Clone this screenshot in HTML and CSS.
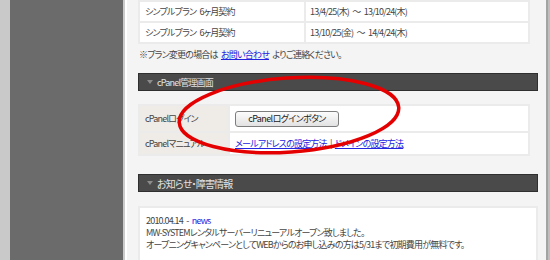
FILE: index.html
```html
<!DOCTYPE html>
<html lang="ja">
<head>
  <meta charset="UTF-8" />
  <title>レンタルサーバー マイページ</title>
  <link rel="stylesheet" href="styles.css">
</head>
<body>
  <div class="layout">
    <div class="edge"></div>
    <div class="sidebar"></div>

    <div class="content">
      <table class="plans">
        <tr><td class="plan"></td><td></td></tr>
        <tr><td class="plan">シンプルプラン 6ヶ月契約</td><td>13/4/25(木) ～ 13/10/24(木)</td></tr>
        <tr><td class="plan">シンプルプラン 6ヶ月契約</td><td>13/10/25(金) ～ 14/4/24(木)</td></tr>
      </table>

      <p class="note">※プラン変更の場合は <a href="#">お問い合わせ</a> よりご連絡ください。</p>

      <h2 class="bar">cPanel管理画面</h2>
      <table class="info">
        <tr class="login">
          <th>cPanelログイン</th>
          <td><button class="btn">cPanelログインボタン</button></td>
        </tr>
        <tr>
          <th>cPanelマニュアル</th>
          <td><a href="#">メールアドレスの設定方法</a> | <a href="#">ドメインの設定方法</a></td>
        </tr>
      </table>

      <h2 class="bar bar-news">お知らせ・障害情報</h2>
      <div class="news">
        <p>2010.04.14 - <a href="#" class="tag">news</a></p>
        <p>MW-SYSTEMレンタルサーバーリニューアルオープン致しました。</p>
        <p>オープニングキャンペーンとしてWEBからのお申し込みの方は5/31まで初期費用が無料です。</p>
      </div>
    </div>

    <div class="scroll"></div>

    <!-- red marker drawn over the login button -->
    <svg class="mark" width="250" height="100" viewBox="0 0 250 100">
      <ellipse cx="119" cy="45" rx="110" ry="37" transform="rotate(-4 119 45)"
               fill="none" stroke="#e40000" stroke-width="3.5" />
    </svg>
  </div>
</body>
</html>
```

FILE: styles.css
```css
body {
  margin: 0;
  padding: 0;
  overflow: hidden;
  font-family: "Noto Sans CJK JP", "DejaVu Sans", sans-serif;
  font-size: 9px;
  letter-spacing: -0.8px;
  word-spacing: 2px;
  font-feature-settings: "palt";
  color: #444;
}

.layout {
  position: relative;
  display: flex;
  height: 260px;
  overflow: hidden;
}

.edge {
  width: 10px;
  background-color: #c9c9c9;
}

.sidebar {
  width: 113px;
  background-color: #6b6b6b;
}

.content {
  width: 400px;
  padding: 0 8px 0 13px;
  background-color: #f4f4f4;
  border-left: 2px solid #cacaca;
  box-shadow: inset 2px 0 0 #ffffff;
  border-right: 2px solid #a3a3a3;
}

.scroll {
  flex: 1;
  background-color: #bebebe;
}

a {
  color: #2323e0;
}

/* plan list */
.plans {
  width: 392px;
  margin-top: -21px;
  border-collapse: collapse;
  background-color: #fff;
}

.plans td {
  height: 19px;
  padding: 0 0 0 4px;
  border: 2px solid #ebebeb;
  line-height: 19px;
  white-space: nowrap;
}

.plans td.plan {
  width: 159px;
  padding-left: 5px;
}

.note {
  margin: 5px 0 0 1px;
  line-height: 12px;
}

/* section bars */
.bar {
  display: flex;
  align-items: center;
  height: 16px;
  margin: 12px 0 0 0;
  padding-left: 8px;
  background-color: #4a4a4a;
  border: 1px solid #2f2f2f;
  color: #e2e2e2;
  font-size: 9px;
  font-weight: normal;
}

.bar::before {
  content: "";
  width: 0;
  height: 0;
  margin-right: 4px;
  border-left: 3px solid transparent;
  border-right: 3px solid transparent;
  border-top: 4px solid #8c8c8c;
}

.bar-news {
  margin-top: 18px;
  font-size: 10px;
}

/* cPanel table */
.info {
  width: 392px;
  margin-top: 13px;
  border-collapse: collapse;
  background-color: #fff;
}

.info th,
.info td {
  height: 21px;
  padding: 0 5px;
  border: 2px solid #ebebeb;
  text-align: left;
  font-weight: normal;
  white-space: nowrap;
}

.info th {
  width: 78px;
  background-color: #efebe7;
}

.info .login th,
.info .login td {
  height: 25px;
}

.btn {
  width: 104px;
  height: 16px;
  padding: 0;
  background: linear-gradient(#fcfcfc, #e2e2e2);
  border: 1px solid #7d7d7d;
  border-radius: 3px;
  font-family: inherit;
  font-size: 9px;
  letter-spacing: -0.6px;
  font-feature-settings: "palt";
  color: #222;
}

/* news */
.news {
  height: 60px;
  margin-top: 14px;
  padding: 7px 6px 0;
  background-color: #fff;
  border: 2px solid #ebebeb;
}

.news p {
  margin: 0;
  line-height: 12px;
  white-space: nowrap;
}

.news .tag {
  text-decoration: none;
}

.mark {
  position: absolute;
  left: 170px;
  top: 70px;
}
```
